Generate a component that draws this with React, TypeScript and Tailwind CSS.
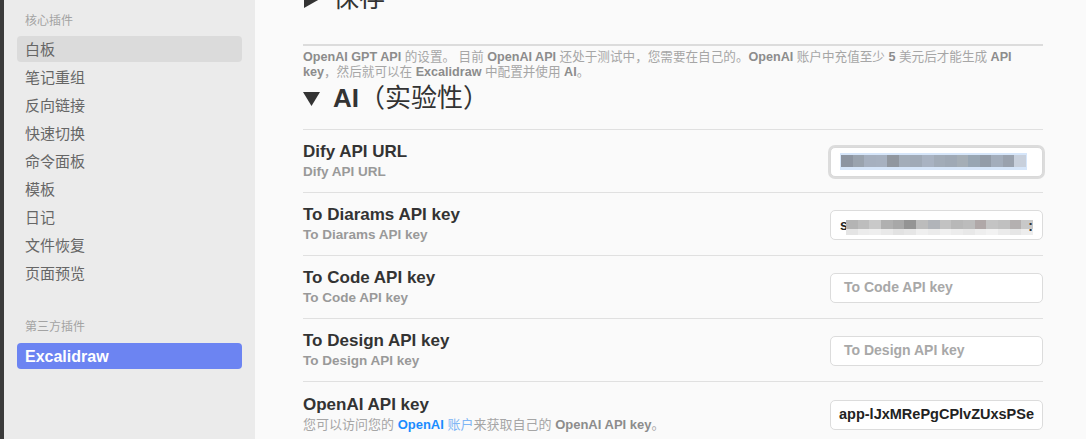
import React from "react";

const F = "font-['Liberation_Sans','Noto_Sans_CJK_SC',sans-serif]";

const core = ["白板", "笔记重组", "反向链接", "快速切换", "命令面板", "模板", "日记", "文件恢复", "页面预览"];

function Mosaic1() {
  const cols = ["#8d95a1", "#9aa3ae", "#a6b0bf", "#a7b1c0", "#91979f", "#a3adb9", "#a0aab7", "#a9b3c2", "#a2acb8", "#9fa9b5", "#a5aeb6", "#98a6b3", "#939ca8", "#a3adbb", "#9aa2ae", "#c8d0dc"];
  return (
    <div className="absolute left-[9px] top-[5px] flex h-[17px] w-[187px] items-center bg-[#d6e6fa] px-[1px]">
      {cols.map((c, i) => (
        <span key={i} className="h-[12px] flex-1" style={{ background: c }} />
      ))}
    </div>
  );
}

function Mosaic2() {
  const top = ["#b4b4b4", "#bdbdbd", "#c9c9c9", "#b0b0b0", "#a8a8a8", "#949494", "#bcbcbc", "#b1b4b9", "#c2c2c2", "#b8b8b8", "#bcbcbc", "#b0a8a8", "#c4c4c4", "#c0c0c0", "#b4b0b0", "#c8c8c8"];
  const bot = ["#e4e4e4", "#ececec", "#eeeeee", "#e9e9e9", "#e2e2e2", "#e6e6e6", "#efefef", "#ebebeb", "#f0f0f0", "#ececec", "#e8e8e8", "#eeeeee", "#f2f2f2", "#ebebeb", "#e6e6e6", "#ededed"];
  return (
    <>
      <span className="absolute left-[9px] top-[6px] text-[14px] font-bold leading-[16px] text-[#222]">s</span>
      <div className="absolute left-[15px] top-[9px] flex w-[187px] flex-col">
        <div className="flex h-[9px]">
          {top.map((c, i) => (
            <span key={i} className="flex-1" style={{ background: c }} />
          ))}
        </div>
        <div className="flex h-[6px]">
          {bot.map((c, i) => (
            <span key={i} className="flex-1" style={{ background: c }} />
          ))}
        </div>
      </div>
      <span className="absolute right-[9px] top-[7px] text-[14px] font-bold leading-[16px] text-[#333]">:</span>
    </>
  );
}

function Row({ title, desc, children }: { title: string; desc: React.ReactNode; children: React.ReactNode }) {
  return (
    <div className="flex items-center justify-between border-b border-[#e0e0e0] pt-[11px] pb-[10px]">
      <div className="flex flex-col">
        <div className="text-[17px] font-bold leading-[21px] text-[#333]">{title}</div>
        <div className="text-[13.5px] font-bold leading-[20px] text-[#999]">{desc}</div>
      </div>
      {children}
    </div>
  );
}

function Box({ children, focused }: { children?: React.ReactNode; focused?: boolean }) {
  return (
    <div
      className={
        "relative h-[30px] w-[213px] overflow-hidden rounded-[5px] border bg-white " +
        (focused ? "border-[#d9d9d9] shadow-[0_0_0_2px_#dcdcdc]" : "border-[#dcdcdc]")
      }
    >
      {children}
    </div>
  );
}

function Placeholder({ text }: { text: string }) {
  return <div className="flex h-full items-center whitespace-nowrap pl-[13px] text-[14px] font-bold text-[#a8a8a8]">{text}</div>;
}

export default function App() {
  return (
    <div className={"flex h-[439px] w-full overflow-hidden " + F}>
      <div className="w-[4px] shrink-0 bg-[#3b3b3b]" />
      <aside className="w-[251px] shrink-0 bg-[#ebebeb] px-[13px] pt-[12px]">
        <div className="h-[18px] pl-[8px] text-[12px] leading-[18px] text-[#a3a3a3]">核心插件</div>
        <div className="mt-[6px] flex flex-col gap-[2px]">
          {core.map((c, i) => (
            <div
              key={c}
              className={
                "flex h-[26px] items-center rounded-[4px] pl-[8px] pt-[3px] text-[15px] text-[#666] " + (i === 0 ? "bg-[#dbdbdb]" : "")
              }
            >
              {c}
            </div>
          ))}
        </div>
        <div className="mt-[32px] h-[18px] pl-[8px] text-[12px] leading-[18px] text-[#a3a3a3]">第三方插件</div>
        <div className="mt-[7px] flex h-[26px] items-center rounded-[4px] bg-[#6c84f2] pl-[8px] pt-[1px] text-[16px] font-bold text-white">
          Excalidraw
        </div>
      </aside>
      <main className="flex-1 overflow-hidden bg-[#fafafa] pl-[48px] pr-[43px]">
        <div className="mt-[-18px] flex h-[32px] items-center text-[26px] leading-[32px] text-[#333]">
          <svg width="17" height="17" viewBox="0 0 17 17" className="mt-[2px] shrink-0">
            <path d="M1 0 L16 8.5 L1 17 Z" fill="#333" />
          </svg>
          <span className="ml-[13px]">保存</span>
        </div>
        <div className="mt-[30px] border-t-2 border-[#dcdcdc] pt-[4px] text-[12.6px] leading-[15px] text-[#a6a6a6] whitespace-nowrap">
          <b className="text-[#8c8c8c]">OpenAI GPT API</b> 的设置。 目前 <b className="text-[#8c8c8c]">OpenAI API</b>{" "}
          还处于测试中，您需要在自己的。<b className="text-[#8c8c8c]">OpenAI</b> 账户中充值至少 <b className="text-[#8c8c8c]">5</b>{" "}
          美元后才能生成 <b className="text-[#8c8c8c]">API</b>
          <br />
          <b className="text-[#8c8c8c]">key</b>，然后就可以在 <b className="text-[#8c8c8c]">Excalidraw</b> 中配置并使用{" "}
          <b className="text-[#8c8c8c]">AI</b>。
        </div>
        <div className="mt-[2px] border-b border-[#e0e0e0] pb-[15px]">
          <div className="flex h-[32px] items-center text-[26px] leading-[32px] text-[#333]">
            <svg width="17" height="14" viewBox="0 0 17 14" className="mt-[2px] shrink-0">
              <path d="M0 0 L17 0 L8.5 14 Z" fill="#333" />
            </svg>
            <span className="ml-[13px] font-bold">AI</span>
            <span>（实验性）</span>
          </div>
        </div>
        <Row title="Dify API URL" desc="Dify API URL">
          <Box focused>
            <Mosaic1 />
          </Box>
        </Row>
        <Row title="To Diarams API key" desc="To Diarams API key">
          <Box>
            <Mosaic2 />
          </Box>
        </Row>
        <Row title="To Code API key" desc="To Code API key">
          <Box>
            <Placeholder text="To Code API key" />
          </Box>
        </Row>
        <Row title="To Design API key" desc="To Design API key">
          <Box>
            <Placeholder text="To Design API key" />
          </Box>
        </Row>
        <div className="flex items-center justify-between pt-[12px] pb-[10px]">
          <div className="flex flex-col">
            <div className="text-[17px] font-bold leading-[21px] text-[#333]">OpenAI API key</div>
            <div className="text-[13px] leading-[20px] text-[#a6a6a6] whitespace-nowrap">
              您可以访问您的 <span className="text-[#1a8cff]"><b>OpenAI</b> <span className="text-[#7fb6f5]">账户</span></span>来获取自己的{" "}
              <b className="text-[#8c8c8c]">OpenAI API key</b>。
            </div>
          </div>
          <Box>
            <div className="flex h-full items-center whitespace-nowrap pl-[8px] text-[14.5px] font-bold text-[#222]">
              app-lJxMRePgCPlvZUxsPSe
            </div>
          </Box>
        </div>
      </main>
    </div>
  );
}
